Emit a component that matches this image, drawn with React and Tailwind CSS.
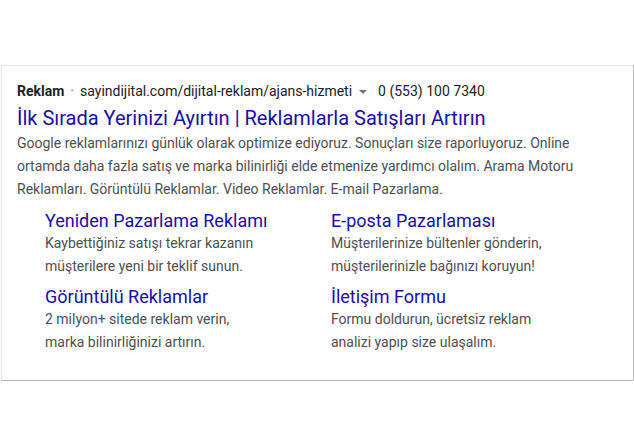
export default function App() {
  const links = [
    { t: "Yeniden Pazarlama Reklamı", d: ["Kaybettiğiniz satışı tekrar kazanın", "müşterilere yeni bir teklif sunun."] },
    { t: "E-posta Pazarlaması", d: ["Müşterilerinize bültenler gönderin,", "müşterilerinizle bağınızı koruyun!"] },
    { t: "Görüntülü Reklamlar", d: ["2 milyon+ sitede reklam verin,", "marka bilinirliğinizi artırın."] },
    { t: "İletişim Formu", d: ["Formu doldurun, ücretsiz reklam", "analizi yapıp size ulaşalım."] },
  ];
  return (
    <div className="w-[634px] h-[446px] bg-white pt-[65px] pl-px" style={{ fontFamily: "Roboto, 'Liberation Sans', sans-serif" }}>
      <div className="w-[633px] h-[316px] border border-[#e6e6e6] border-r-[#bdbdbd] border-b-[#b5b5b5] pl-[15px] pt-[15px]">
        <div className="flex items-center text-[14px] leading-[20px] text-[#202124]">
          <span className="font-bold">Reklam</span>
          <span className="mx-[6px] text-[#5f6368]">·</span>
          <span className="text-[#202124]">sayindijital.com/dijital-reklam/ajans-hizmeti</span>
          <svg width="10" height="10" viewBox="0 0 10 10" className="ml-[6px] mt-[2px]">
            <path d="M1 3 L9 3 L5 7 Z" fill="#70757a" />
          </svg>
          <span className="ml-[10px] text-[#202124]">0 (553) 100 7340</span>
        </div>
        <div className="text-[20px] leading-[26px] text-[#1a0dab] mt-[4px]">İlk Sırada Yerinizi Ayırtın | Reklamlarla Satışları Artırın</div>
        <div className="text-[14px] leading-[23px] text-[#4d5156] mt-[1px] w-[580px]">
          Google reklamlarınızı günlük olarak optimize ediyoruz. Sonuçları size raporluyoruz. Online ortamda daha fazla satış ve marka bilinirliği elde etmenize yardımcı olalım. Arama Motoru Reklamları. Görüntülü Reklamlar. Video Reklamlar. E-mail Pazarlama.
        </div>
        <div className="grid grid-cols-[286px_286px] ml-[28px] mt-[9px] gap-y-[8px]">
          {links.map((l) => (
            <div key={l.t}>
              <div className="text-[18px] leading-[22px] text-[#1a0dab]">{l.t}</div>
              <div className="text-[14px] leading-[23px] text-[#4d5156]">
                {l.d.map((x) => (
                  <div key={x}>{x}</div>
                ))}
              </div>
            </div>
          ))}
        </div>
      </div>
    </div>
  );
}
